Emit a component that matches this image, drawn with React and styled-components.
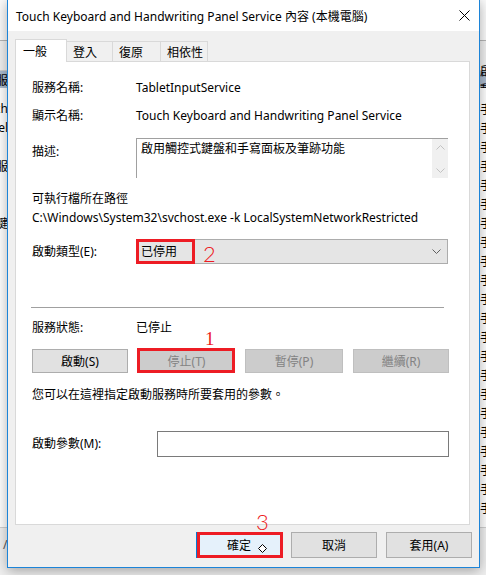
import styled, { createGlobalStyle } from "styled-components";

const GlobalStyle = createGlobalStyle`
  html, body {
    margin: 0;
    padding: 0;
  }

  body {
    width: 486px;
    height: 575px;
    overflow: hidden;
    font-family: "Segoe UI", "Noto Sans", "Noto Sans CJK TC", sans-serif;
    font-size: 12px;
    color: #000;
  }
`;

const Desktop = styled.div`
  position: relative;
  width: 486px;
  height: 575px;
  overflow: hidden;
  background: #f0f0f0;
`;

/* the services console behind the dialog */
const Backdrop = styled.div`
  display: flex;
  flex-direction: column;
  height: 100%;
`;

const MenuStrip = styled.div`
  height: 40px;
  background: #fbfbfb;
  border-bottom: 1px solid #b5b5b5;
`;

const Ribbon = styled.div`
  height: 29px;
  background: #f0f0f0;
  border-bottom: 1px solid #cfcfcf;
`;

const ListHead = styled.div`
  height: 17px;
  background: #aabace;
  display: flex;
  align-items: center;
  justify-content: space-between;
`;

const List = styled.div`
  flex: 1;
  background: #fff;
  display: flex;
  flex-direction: column;
  padding-top: 11px;
  border-bottom: 1px solid #cfcfcf;
`;

const ListRow = styled.div`
  height: 19px;
  display: flex;
  justify-content: space-between;
  align-items: center;
  white-space: nowrap;
`;

const EdgeLeft = styled.div`
  width: 8px;
  overflow: hidden;
  display: flex;
  justify-content: flex-end;
`;

const EdgeRight = styled.div`
  width: 6px;
  overflow: hidden;
`;

const StatusBar = styled.div`
  height: 39px;
  background: #f0f0f0;
  padding: 8px 0 0 3px;
  color: #555;
`;

/* dialog */
const Window = styled.section`
  position: absolute;
  left: 7px;
  top: -1px;
  width: 473px;
  height: 569px;
  box-sizing: border-box;
  border: 1px solid #1c84d8;
  background: #f0f0f0;
  box-shadow: 0 3px 12px rgba(0, 0, 0, 0.32);
  display: flex;
  flex-direction: column;
`;

const TitleBar = styled.header`
  height: 31px;
  flex: none;
  background: #fff;
  display: flex;
  align-items: center;
  padding-left: 8px;
`;

const Title = styled.div`
  flex: 1;
  white-space: nowrap;
`;

const CloseButton = styled.div`
  width: 30px;
  height: 31px;
  display: flex;
  align-items: center;
  justify-content: center;
`;

const Body = styled.div`
  flex: 1;
  display: flex;
  flex-direction: column;
  padding-top: 8px;
`;

const Tabs = styled.div`
  display: flex;
  align-items: flex-end;
  height: 22px;
  margin: 0 9px 0 7px;
  position: relative;
  z-index: 1;
`;

const Tab = styled.div`
  box-sizing: border-box;
  width: ${({ $w }) => $w}px;
  height: ${({ $active }) => ($active ? 23 : 20)}px;
  margin-bottom: ${({ $active }) => ($active ? -1 : 0)}px;
  margin-left: ${({ $first }) => ($first ? 0 : -1)}px;
  padding-left: ${({ $active }) => ($active ? 7 : 6)}px;
  border: 1px solid #d9d9d9;
  border-bottom: none;
  background: ${({ $active }) => ($active ? "#fff" : "#f0f0f0")};
  display: flex;
  align-items: center;
  white-space: nowrap;
`;

const Panel = styled.div`
  height: 464px;
  box-sizing: border-box;
  margin: 0 9px 0 7px;
  padding: 0 20px 0 16px;
  border: 1px solid #d9d9d9;
  background: #fff;
  display: flex;
  flex-direction: column;
`;

const Field = styled.div`
  display: flex;
  align-items: ${({ $top }) => ($top ? "flex-start" : "center")};
  margin-top: ${({ $mt }) => $mt}px;
  line-height: 16px;
  white-space: nowrap;
`;

const Label = styled.div`
  width: ${({ $w }) => $w || 104}px;
  flex: none;
  padding-top: ${({ $pt }) => $pt || 0}px;
`;

const Line = styled.div`
  margin-top: ${({ $mt }) => $mt}px;
  line-height: 16px;
  white-space: nowrap;
`;

const TextArea = styled.div`
  width: 312px;
  height: 40px;
  box-sizing: border-box;
  border-top: 1px solid #a0a0a0;
  border-left: 1px solid #a0a0a0;
  display: flex;
`;

const AreaText = styled.div`
  flex: 1;
  padding: 2px 4px;
  line-height: 16px;
`;

const ScrollBar = styled.div`
  width: 16px;
  background: #f0f0f0;
  display: flex;
  flex-direction: column;
  align-items: center;
  justify-content: space-between;
  padding: 6px 0 5px;
`;

const Combo = styled.div`
  position: relative;
  width: 312px;
  height: 25px;
  box-sizing: border-box;
  border: 1px solid #acacac;
  background: #e5e5e5;
  display: flex;
  align-items: center;
  justify-content: space-between;
  padding: 0 6px 0 4px;
`;

const Separator = styled.div`
  height: 1px;
  background: #a0a0a0;
  margin: 43px 5px 0 -1px;
`;

const ButtonRow = styled.div`
  display: flex;
  justify-content: space-between;
  margin-top: 13px;
`;

const Button = styled.div`
  position: relative;
  box-sizing: border-box;
  width: ${({ $w }) => $w}px;
  height: ${({ $h }) => $h || 24}px;
  border: 1px solid ${({ $disabled }) => ($disabled ? "#bfbfbf" : "#adadad")};
  background: ${({ $disabled }) => ($disabled ? "#cccccc" : "#e1e1e1")};
  color: ${({ $disabled }) => ($disabled ? "#838383" : "#000")};
  display: flex;
  align-items: center;
  justify-content: center;
  white-space: nowrap;
`;

const DefaultButton = styled(Button)`
  border-color: #0078d7;
  background: #e5f1fb;
`;

const Input = styled.div`
  width: 292px;
  height: 26px;
  box-sizing: border-box;
  border: 1px solid #7a7a7a;
  background: #fff;
`;

const Footer = styled.div`
  display: flex;
  justify-content: flex-end;
  gap: 9px;
  margin-top: 7px;
  padding-right: 7px;
`;

/* red annotations drawn on the screenshot */
const Mark = styled.div`
  position: absolute;
  top: ${({ $t }) => $t}px;
  left: ${({ $l }) => $l}px;
  width: ${({ $w }) => $w}px;
  height: ${({ $h }) => $h}px;
  box-sizing: border-box;
  border: 3px solid #ed1c24;
  pointer-events: none;
`;

const Step = styled.span`
  position: absolute;
  top: ${({ $t }) => $t}px;
  left: ${({ $l }) => $l}px;
  color: #ed1c24;
  font-family: ${({ $serif }) => ($serif ? '"Liberation Serif", serif' : "Lato, sans-serif")};
  font-weight: ${({ $serif }) => ($serif ? 400 : 300)};
  font-size: ${({ $size }) => $size}px;
  line-height: 1;
`;

const Cursor = styled.svg`
  position: absolute;
  left: 61px;
  top: 11px;
`;

const Chevron = ({ up, color = "#606060" }) => (
  <svg width="9" height="5" viewBox="0 0 9 5">
    <path
      d={up ? "M0.5 4.5 L4.5 0.5 L8.5 4.5" : "M0.5 0.5 L4.5 4.5 L8.5 0.5"}
      fill="none"
      stroke={color}
      strokeWidth="1"
    />
  </svg>
);

const backRows = [
  ["Touch", "手動"],
  ["Panel", "手動"],
  ["", "手動"],
  ["服", "手動"],
  ["", "手動"],
  ["", "手動"],
  ["鍵", "手動"],
  ["", "手動"],
  ["", "手動"],
  ["", "手動"],
  ["", "手動"],
  ["", "手動"],
  ["", "手動"],
  ["", "手動"],
  ["", "手動"],
  ["", "手動"],
  ["", "手動"],
  ["", "手動"],
  ["", "手動"],
  ["", "手動"],
  ["", "手動"],
  ["", "手動"],
];

const tabs = [
  { name: "一般", w: 52 },
  { name: "登入", w: 47 },
  { name: "復原", w: 49 },
  { name: "相依性", w: 48 },
];

export default function App() {
  return (
    <Desktop>
      <GlobalStyle />
      <Backdrop>
        <MenuStrip />
        <Ribbon />
        <ListHead>
          <EdgeLeft>服</EdgeLeft>
          <EdgeRight>啟動</EdgeRight>
        </ListHead>
        <List>
          {backRows.map(([left, right], i) => (
            <ListRow key={i}>
              <EdgeLeft>{left}</EdgeLeft>
              <EdgeRight>{right}</EdgeRight>
            </ListRow>
          ))}
        </List>
        <StatusBar>/</StatusBar>
      </Backdrop>

      <Window>
        <TitleBar>
          <Title>Touch Keyboard and Handwriting Panel Service 內容 (本機電腦)</Title>
          <CloseButton>
            <svg width="11" height="11" viewBox="0 0 11 11">
              <path d="M0.5 0.5 L10.5 10.5 M10.5 0.5 L0.5 10.5" stroke="#000" strokeWidth="1" />
            </svg>
          </CloseButton>
        </TitleBar>

        <Body>
          <Tabs>
            {tabs.map((t, i) => (
              <Tab key={t.name} $w={t.w} $active={i === 0} $first={i === 0}>
                {t.name}
              </Tab>
            ))}
          </Tabs>

          <Panel>
            <Field $mt={18}>
              <Label>服務名稱:</Label>
              <div>TabletInputService</div>
            </Field>
            <Field $mt={12}>
              <Label>顯示名稱:</Label>
              <div>Touch Keyboard and Handwriting Panel Service</div>
            </Field>
            <Field $mt={14} $top>
              <Label $pt={6}>描述:</Label>
              <TextArea>
                <AreaText>啟用觸控式鍵盤和手寫面板及筆跡功能</AreaText>
                <ScrollBar>
                  <Chevron up color="#c2c2c2" />
                  <Chevron color="#c2c2c2" />
                </ScrollBar>
              </TextArea>
            </Field>
            <Line $mt={13}>可執行檔所在路徑</Line>
            <Line $mt={3}>C:\Windows\System32\svchost.exe -k LocalSystemNetworkRestricted</Line>
            <Field $mt={13}>
              <Label>啟動類型(E):</Label>
              <Combo>
                <span>已停用</span>
                <Chevron />
                <Mark $t={-1} $l={-1} $w={59} $h={25} />
                <Step $t={3} $l={66} $size={22}>2</Step>
              </Combo>
            </Field>

            <Separator />

            <Field $mt={12}>
              <Label>服務狀態:</Label>
              <div>已停止</div>
            </Field>
            <ButtonRow>
              <Button $w={96}>啟動(S)</Button>
              <Button $w={97} $disabled>
                停止(T)
                <Mark $t={-2} $l={-2} $w={98} $h={25} />
                <Step $t={-21} $l={66} $size={19} $serif>1</Step>
              </Button>
              <Button $w={98} $disabled>暫停(P)</Button>
              <Button $w={96} $disabled>繼續(R)</Button>
            </ButtonRow>
            <Line $mt={14}>您可以在這裡指定啟動服務時所要套用的參數。</Line>
            <Field $mt={28}>
              <Label $w={125}>啟動參數(M):</Label>
              <Input />
            </Field>
          </Panel>

          <Footer>
            <DefaultButton $w={86} $h={26}>
              確定
              <Cursor width="9" height="9" viewBox="0 0 9 9">
                <path d="M4.5 0.5 L8.5 4.5 L4.5 8.5 L0.5 4.5 Z" fill="#fff" stroke="#000" strokeWidth="1" />
              </Cursor>
              <Mark $t={-1} $l={0} $w={86} $h={26} />
              <Step $t={-22} $l={59} $size={22}>3</Step>
            </DefaultButton>
            <Button $w={86} $h={26}>取消</Button>
            <Button $w={86} $h={26}>套用(A)</Button>
          </Footer>
        </Body>
      </Window>
    </Desktop>
  );
}
